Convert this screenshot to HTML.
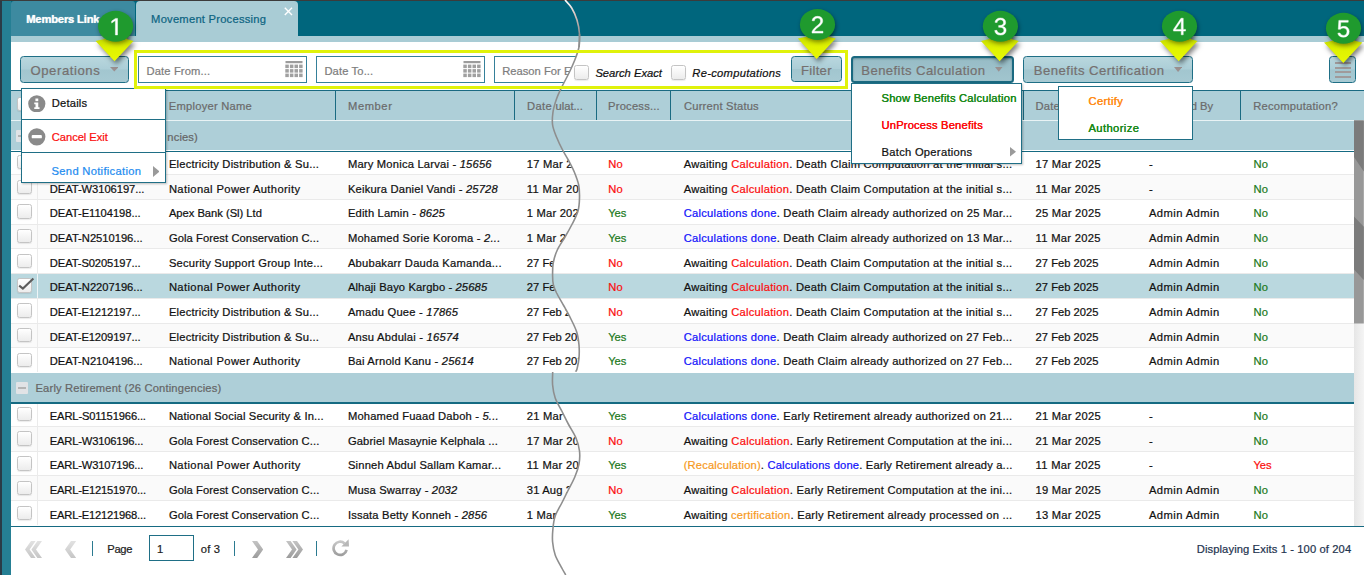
<!DOCTYPE html>
<html><head><meta charset="utf-8"><title>Movement Processing</title>
<style>
html,body{margin:0;padding:0;background:#fff;}
body{width:1365px;height:575px;overflow:hidden;position:relative;font-family:"Liberation Sans",sans-serif;}
.t{position:absolute;white-space:nowrap;font-family:"Liberation Sans",sans-serif;-webkit-text-stroke-width:0.22px;}
</style></head><body>
<div style="position:absolute;left:0.00px;top:0.00px;width:1365.00px;height:575.00px;background:#fff"></div>
<div style="position:absolute;left:0.00px;top:0.00px;width:1365.00px;height:1.00px;background:#3b3b3b"></div>
<div style="position:absolute;left:0.00px;top:1.00px;width:1365.00px;height:35.00px;background:#00667d"></div>
<div style="position:absolute;left:0.00px;top:1.00px;width:2.20px;height:574.00px;background:#2a3b47"></div>
<div style="position:absolute;left:2.00px;top:1.00px;width:9.00px;height:574.00px;background:#257f94"></div>
<div style="position:absolute;left:11.00px;top:1.00px;width:124.00px;height:35.00px;background:#3d8aa0;border-radius:3px 3px 0 0"></div>
<div style="position:absolute;left:136.00px;top:1.00px;width:162.30px;height:35.50px;background:#a9ccd5;border-radius:4px 4px 0 0"></div>
<div style="position:absolute;left:11.00px;top:36.00px;width:1353.00px;height:6.00px;background:#a9ccd5"></div>
<div class="t" style="left:26.20px;top:12.00px;font-size:11.20px;line-height:15px;letter-spacing:-0.168px;text-shadow:0 0 1px rgba(255,255,255,.6);"><span style="color:#fff;font-weight:bold;">Members Link</span></div>
<div class="t" style="left:151.10px;top:12.00px;font-size:11.20px;line-height:15px;letter-spacing:0.231px;"><span style="color:#0d6482;">Movement Processing</span></div>
<svg style="position:absolute;left:284px;top:7.3px" width="9" height="9" viewBox="0 0 9 9"><path d="M0.8 0.8 L8 8 M8 0.8 L0.8 8" stroke="#fff" stroke-width="1.4" fill="none"/></svg>
<div style="position:absolute;left:20.00px;top:56.30px;width:109.00px;height:26.40px;background:linear-gradient(#b9d7de 0%,#acced7 48%,#a2c6cf 52%,#a7cad3 100%);border:1px solid #1f6f86;border-radius:3.5px;box-sizing:border-box;"></div>
<div class="t" style="left:30.50px;top:62.00px;font-size:13.10px;line-height:17px;letter-spacing:0.572px;"><span style="color:#75706f;">Operations</span></div>
<svg style="position:absolute;left:109.80px;top:67.00px" width="8.60" height="4.60" viewBox="0 0 10 6" preserveAspectRatio="none"><path d="M0 0 L10 0 L5 6 Z" fill="#9a9090"/></svg>
<div style="position:absolute;left:138.00px;top:56.00px;width:168.80px;height:26.70px;background:#fff;border:1px solid #35809a;box-sizing:border-box;"></div>
<div class="t" style="left:146.60px;top:64.00px;font-size:11.20px;line-height:15px;letter-spacing:0.114px;"><span style="color:#7d7d7d;">Date From...</span></div>
<svg style="position:absolute;left:285.00px;top:61.00px" width="18" height="17" viewBox="0 0 18 17"><rect x="0.5" y="0" width="17" height="2.2" fill="#9c9c9c"/><rect x="0.30" y="3.60" width="3.5" height="3.5" fill="#a0a0a0"/><rect x="4.90" y="3.60" width="3.5" height="3.5" fill="#a0a0a0"/><rect x="9.50" y="3.60" width="3.5" height="3.5" fill="#a0a0a0"/><rect x="14.10" y="3.60" width="3.5" height="3.5" fill="#a0a0a0"/><rect x="0.30" y="8.10" width="3.5" height="3.5" fill="#a0a0a0"/><rect x="4.90" y="8.10" width="3.5" height="3.5" fill="#a0a0a0"/><rect x="9.50" y="8.10" width="3.5" height="3.5" fill="#a0a0a0"/><rect x="14.10" y="8.10" width="3.5" height="3.5" fill="#a0a0a0"/><rect x="0.30" y="12.60" width="3.5" height="3.5" fill="#a0a0a0"/><rect x="4.90" y="12.60" width="3.5" height="3.5" fill="#a0a0a0"/><rect x="9.50" y="12.60" width="3.5" height="3.5" fill="#a0a0a0"/><rect x="14.10" y="12.60" width="3.5" height="3.5" fill="#a0a0a0"/></svg>
<div style="position:absolute;left:316.00px;top:56.00px;width:169.20px;height:26.70px;background:#fff;border:1px solid #35809a;box-sizing:border-box;"></div>
<div class="t" style="left:324.40px;top:64.00px;font-size:11.20px;line-height:15px;letter-spacing:0.127px;"><span style="color:#7d7d7d;">Date To...</span></div>
<svg style="position:absolute;left:463.30px;top:61.00px" width="18" height="17" viewBox="0 0 18 17"><rect x="0.5" y="0" width="17" height="2.2" fill="#9c9c9c"/><rect x="0.30" y="3.60" width="3.5" height="3.5" fill="#a0a0a0"/><rect x="4.90" y="3.60" width="3.5" height="3.5" fill="#a0a0a0"/><rect x="9.50" y="3.60" width="3.5" height="3.5" fill="#a0a0a0"/><rect x="14.10" y="3.60" width="3.5" height="3.5" fill="#a0a0a0"/><rect x="0.30" y="8.10" width="3.5" height="3.5" fill="#a0a0a0"/><rect x="4.90" y="8.10" width="3.5" height="3.5" fill="#a0a0a0"/><rect x="9.50" y="8.10" width="3.5" height="3.5" fill="#a0a0a0"/><rect x="14.10" y="8.10" width="3.5" height="3.5" fill="#a0a0a0"/><rect x="0.30" y="12.60" width="3.5" height="3.5" fill="#a0a0a0"/><rect x="4.90" y="12.60" width="3.5" height="3.5" fill="#a0a0a0"/><rect x="9.50" y="12.60" width="3.5" height="3.5" fill="#a0a0a0"/><rect x="14.10" y="12.60" width="3.5" height="3.5" fill="#a0a0a0"/></svg>
<div style="position:absolute;left:11.00px;top:90.00px;width:1354.00px;height:30.50px;background:#aecfd8"></div>
<div style="position:absolute;left:11.00px;top:90.00px;width:1354.00px;height:1.20px;background:#1a6a82"></div>
<div style="position:absolute;left:11.00px;top:119.80px;width:1354.00px;height:1.20px;background:#e9f3f5"></div>
<div style="position:absolute;left:156.70px;top:91.00px;width:1.30px;height:28.80px;background:#1b6b82"></div>
<div style="position:absolute;left:335.00px;top:91.00px;width:1.30px;height:28.80px;background:#1b6b82"></div>
<div style="position:absolute;left:514.10px;top:91.00px;width:1.30px;height:28.80px;background:#1b6b82"></div>
<div style="position:absolute;left:595.70px;top:91.00px;width:1.30px;height:28.80px;background:#1b6b82"></div>
<div style="position:absolute;left:669.80px;top:91.00px;width:1.30px;height:28.80px;background:#1b6b82"></div>
<div style="position:absolute;left:1022.60px;top:91.00px;width:1.30px;height:28.80px;background:#1b6b82"></div>
<div style="position:absolute;left:1239.80px;top:91.00px;width:1.30px;height:28.80px;background:#1b6b82"></div>
<div class="t" style="left:168.80px;top:99.00px;font-size:11.20px;line-height:15px;letter-spacing:0.224px;"><span style="color:#6b6b6b;">Employer Name</span></div>
<div class="t" style="left:348.00px;top:99.00px;font-size:11.20px;line-height:15px;letter-spacing:0.571px;"><span style="color:#6b6b6b;">Member</span></div>
<div class="t" style="left:555.60px;top:99.00px;font-size:11.20px;line-height:15px;letter-spacing:-0.028px;"><span style="color:#6b6b6b;">ulat...</span></div>
<div class="t" style="left:608.00px;top:99.00px;font-size:11.20px;line-height:15px;letter-spacing:0.221px;"><span style="color:#6b6b6b;">Process...</span></div>
<div class="t" style="left:684.00px;top:99.00px;font-size:11.20px;line-height:15px;letter-spacing:0.199px;"><span style="color:#6b6b6b;">Current Status</span></div>
<div class="t" style="left:1035.50px;top:99.00px;font-size:11.20px;line-height:15px;letter-spacing:0.211px;"><span style="color:#6b6b6b;">Date</span></div>
<div class="t" style="left:1190.80px;top:99.00px;font-size:11.20px;line-height:15px;letter-spacing:-0.053px;"><span style="color:#6b6b6b;">d By</span></div>
<div class="t" style="left:1253.30px;top:99.00px;font-size:11.20px;line-height:15px;letter-spacing:0.224px;"><span style="color:#6b6b6b;">Recomputation?</span></div>
<div style="position:absolute;left:17.30px;top:97.00px;width:14.40px;height:14.40px;box-sizing:border-box;border:1px solid #c4c4c4;border-radius:2.5px;background:linear-gradient(#ffffff,#ececec);box-shadow:0 1px 1px rgba(0,0,0,.08)"></div>
<div style="position:absolute;left:11.00px;top:121.00px;width:1343.00px;height:31.20px;background:#aecfd8"></div>
<div style="position:absolute;left:11.00px;top:151.00px;width:1343.00px;height:1.40px;background:#156a82"></div>
<div style="position:absolute;left:16.00px;top:130.10px;width:12.00px;height:12.00px;background:#e1e3e6;border-radius:1px"></div>
<div style="position:absolute;left:18.00px;top:135.30px;width:8.00px;height:1.70px;background:#b4b4b4"></div>
<div class="t" style="left:167.30px;top:130.00px;font-size:11.20px;line-height:15px;letter-spacing:0.137px;"><span style="color:#666;">ncies)</span></div>
<div style="position:absolute;left:11.00px;top:150.40px;width:1343.00px;height:24.73px;background:#fff"></div>
<div style="position:absolute;left:11.00px;top:174.00px;width:1343.00px;height:1.00px;background:#eaeaea"></div>
<div style="position:absolute;left:37.00px;top:150.40px;width:1.00px;height:24.23px;background:#ebebeb"></div>
<div style="position:absolute;left:17.30px;top:154.80px;width:14.40px;height:14.40px;box-sizing:border-box;border:1px solid #c4c4c4;border-radius:2.5px;background:linear-gradient(#ffffff,#ececec);box-shadow:0 1px 1px rgba(0,0,0,.08)"></div>
<div class="t" style="left:168.90px;top:157.00px;font-size:11.20px;line-height:15px;letter-spacing:0.207px;"><span style="color:#111;">Electricity Distribution &amp; Su...</span></div>
<div class="t" style="left:347.90px;top:157.00px;font-size:11.20px;line-height:15px;letter-spacing:0.199px;"><span style="color:#111;">Mary Monica Larvai - </span><span style="color:#111;font-style:italic;">15656</span></div>
<div class="t" style="left:608.20px;top:157.00px;font-size:11.20px;line-height:15px;letter-spacing:0.341px;"><span style="color:#fb0d0d;">No</span></div>
<div class="t" style="left:683.70px;top:157.00px;font-size:11.20px;line-height:15px;letter-spacing:0.249px;"><span style="color:#111;">Awaiting </span><span style="color:#fb0d0d;">Calculation</span><span style="color:#111;">. Death Claim Computation at the initial s...</span></div>
<div class="t" style="left:1035.60px;top:157.00px;font-size:11.20px;line-height:15px;letter-spacing:0.219px;"><span style="color:#111;">17 Mar 2025</span></div>
<div class="t" style="left:1148.90px;top:157.00px;font-size:11.20px;line-height:15px;letter-spacing:0.000px;"><span style="color:#111;">-</span></div>
<div class="t" style="left:1253.50px;top:157.00px;font-size:11.20px;line-height:15px;letter-spacing:0.191px;"><span style="color:#1c7a1c;">No</span></div>
<div style="position:absolute;left:11.00px;top:175.13px;width:1343.00px;height:24.73px;background:#fafafa"></div>
<div style="position:absolute;left:11.00px;top:199.00px;width:1343.00px;height:1.00px;background:#eaeaea"></div>
<div style="position:absolute;left:37.00px;top:175.13px;width:1.00px;height:24.23px;background:#ebebeb"></div>
<div style="position:absolute;left:17.30px;top:179.53px;width:14.40px;height:14.40px;box-sizing:border-box;border:1px solid #c4c4c4;border-radius:2.5px;background:linear-gradient(#ffffff,#ececec);box-shadow:0 1px 1px rgba(0,0,0,.08)"></div>
<div class="t" style="left:49.80px;top:182.00px;font-size:11.20px;line-height:15px;letter-spacing:-0.060px;"><span style="color:#111;">DEAT-W3106197...</span></div>
<div class="t" style="left:168.90px;top:182.00px;font-size:11.20px;line-height:15px;letter-spacing:0.377px;"><span style="color:#111;">National Power Authority</span></div>
<div class="t" style="left:347.90px;top:182.00px;font-size:11.20px;line-height:15px;letter-spacing:0.191px;"><span style="color:#111;">Keikura Daniel Vandi - </span><span style="color:#111;font-style:italic;">25728</span></div>
<div class="t" style="left:608.20px;top:182.00px;font-size:11.20px;line-height:15px;letter-spacing:0.341px;"><span style="color:#fb0d0d;">No</span></div>
<div class="t" style="left:683.70px;top:182.00px;font-size:11.20px;line-height:15px;letter-spacing:0.249px;"><span style="color:#111;">Awaiting </span><span style="color:#fb0d0d;">Calculation</span><span style="color:#111;">. Death Claim Computation at the initial s...</span></div>
<div class="t" style="left:1035.60px;top:182.00px;font-size:11.20px;line-height:15px;letter-spacing:0.295px;"><span style="color:#111;">11 Mar 2025</span></div>
<div class="t" style="left:1148.90px;top:182.00px;font-size:11.20px;line-height:15px;letter-spacing:0.000px;"><span style="color:#111;">-</span></div>
<div class="t" style="left:1253.50px;top:182.00px;font-size:11.20px;line-height:15px;letter-spacing:0.191px;"><span style="color:#1c7a1c;">No</span></div>
<div style="position:absolute;left:11.00px;top:199.86px;width:1343.00px;height:24.73px;background:#fff"></div>
<div style="position:absolute;left:11.00px;top:224.00px;width:1343.00px;height:1.00px;background:#eaeaea"></div>
<div style="position:absolute;left:37.00px;top:199.86px;width:1.00px;height:24.23px;background:#ebebeb"></div>
<div style="position:absolute;left:17.30px;top:204.26px;width:14.40px;height:14.40px;box-sizing:border-box;border:1px solid #c4c4c4;border-radius:2.5px;background:linear-gradient(#ffffff,#ececec);box-shadow:0 1px 1px rgba(0,0,0,.08)"></div>
<div class="t" style="left:49.80px;top:206.00px;font-size:11.20px;line-height:15px;letter-spacing:-0.052px;"><span style="color:#111;">DEAT-E1104198...</span></div>
<div class="t" style="left:168.90px;top:206.00px;font-size:11.20px;line-height:15px;letter-spacing:-0.016px;"><span style="color:#111;">Apex Bank (Sl) Ltd</span></div>
<div class="t" style="left:347.90px;top:206.00px;font-size:11.20px;line-height:15px;letter-spacing:0.177px;"><span style="color:#111;">Edith Lamin - </span><span style="color:#111;font-style:italic;">8625</span></div>
<div class="t" style="left:608.20px;top:206.00px;font-size:11.20px;line-height:15px;letter-spacing:-0.024px;"><span style="color:#1c7a1c;">Yes</span></div>
<div class="t" style="left:683.70px;top:206.00px;font-size:11.20px;line-height:15px;letter-spacing:0.237px;"><span style="color:#1212fa;">Calculations done</span><span style="color:#111;">. Death Claim already authorized on 25 Mar...</span></div>
<div class="t" style="left:1035.60px;top:206.00px;font-size:11.20px;line-height:15px;letter-spacing:0.219px;"><span style="color:#111;">25 Mar 2025</span></div>
<div class="t" style="left:1148.90px;top:206.00px;font-size:11.20px;line-height:15px;letter-spacing:0.438px;"><span style="color:#111;">Admin Admin</span></div>
<div class="t" style="left:1253.50px;top:206.00px;font-size:11.20px;line-height:15px;letter-spacing:0.191px;"><span style="color:#1c7a1c;">No</span></div>
<div style="position:absolute;left:11.00px;top:224.59px;width:1343.00px;height:24.73px;background:#fafafa"></div>
<div style="position:absolute;left:11.00px;top:248.00px;width:1343.00px;height:1.00px;background:#eaeaea"></div>
<div style="position:absolute;left:37.00px;top:224.59px;width:1.00px;height:24.23px;background:#ebebeb"></div>
<div style="position:absolute;left:17.30px;top:228.99px;width:14.40px;height:14.40px;box-sizing:border-box;border:1px solid #c4c4c4;border-radius:2.5px;background:linear-gradient(#ffffff,#ececec);box-shadow:0 1px 1px rgba(0,0,0,.08)"></div>
<div class="t" style="left:49.80px;top:231.00px;font-size:11.20px;line-height:15px;letter-spacing:-0.017px;"><span style="color:#111;">DEAT-N2510196...</span></div>
<div class="t" style="left:168.90px;top:231.00px;font-size:11.20px;line-height:15px;letter-spacing:0.078px;"><span style="color:#111;">Gola Forest Conservation C...</span></div>
<div class="t" style="left:347.90px;top:231.00px;font-size:11.20px;line-height:15px;letter-spacing:0.215px;"><span style="color:#111;">Mohamed Sorie Koroma - </span><span style="color:#111;font-style:italic;">2...</span></div>
<div class="t" style="left:608.20px;top:231.00px;font-size:11.20px;line-height:15px;letter-spacing:-0.024px;"><span style="color:#1c7a1c;">Yes</span></div>
<div class="t" style="left:683.70px;top:231.00px;font-size:11.20px;line-height:15px;letter-spacing:0.237px;"><span style="color:#1212fa;">Calculations done</span><span style="color:#111;">. Death Claim already authorized on 13 Mar...</span></div>
<div class="t" style="left:1035.60px;top:231.00px;font-size:11.20px;line-height:15px;letter-spacing:0.295px;"><span style="color:#111;">11 Mar 2025</span></div>
<div class="t" style="left:1148.90px;top:231.00px;font-size:11.20px;line-height:15px;letter-spacing:0.438px;"><span style="color:#111;">Admin Admin</span></div>
<div class="t" style="left:1253.50px;top:231.00px;font-size:11.20px;line-height:15px;letter-spacing:0.191px;"><span style="color:#1c7a1c;">No</span></div>
<div style="position:absolute;left:11.00px;top:249.32px;width:1343.00px;height:24.73px;background:#fff"></div>
<div style="position:absolute;left:11.00px;top:273.00px;width:1343.00px;height:1.00px;background:#eaeaea"></div>
<div style="position:absolute;left:37.00px;top:249.32px;width:1.00px;height:24.23px;background:#ebebeb"></div>
<div style="position:absolute;left:17.30px;top:253.72px;width:14.40px;height:14.40px;box-sizing:border-box;border:1px solid #c4c4c4;border-radius:2.5px;background:linear-gradient(#ffffff,#ececec);box-shadow:0 1px 1px rgba(0,0,0,.08)"></div>
<div class="t" style="left:49.80px;top:256.00px;font-size:11.20px;line-height:15px;letter-spacing:-0.104px;"><span style="color:#111;">DEAT-S0205197...</span></div>
<div class="t" style="left:168.90px;top:256.00px;font-size:11.20px;line-height:15px;letter-spacing:0.208px;"><span style="color:#111;">Security Support Group Inte...</span></div>
<div class="t" style="left:347.90px;top:256.00px;font-size:11.20px;line-height:15px;letter-spacing:0.224px;"><span style="color:#111;">Abubakarr Dauda Kamanda...</span></div>
<div class="t" style="left:608.20px;top:256.00px;font-size:11.20px;line-height:15px;letter-spacing:0.341px;"><span style="color:#fb0d0d;">No</span></div>
<div class="t" style="left:683.70px;top:256.00px;font-size:11.20px;line-height:15px;letter-spacing:0.249px;"><span style="color:#111;">Awaiting </span><span style="color:#fb0d0d;">Calculation</span><span style="color:#111;">. Death Claim Computation at the initial s...</span></div>
<div class="t" style="left:1035.60px;top:256.00px;font-size:11.20px;line-height:15px;letter-spacing:0.009px;"><span style="color:#111;">27 Feb 2025</span></div>
<div class="t" style="left:1148.90px;top:256.00px;font-size:11.20px;line-height:15px;letter-spacing:0.438px;"><span style="color:#111;">Admin Admin</span></div>
<div class="t" style="left:1253.50px;top:256.00px;font-size:11.20px;line-height:15px;letter-spacing:0.191px;"><span style="color:#1c7a1c;">No</span></div>
<div style="position:absolute;left:11.00px;top:274.05px;width:1343.00px;height:24.73px;background:#bad8df"></div>
<div style="position:absolute;left:11.00px;top:298.00px;width:1343.00px;height:1.00px;background:#eaeaea"></div>
<div style="position:absolute;left:37.00px;top:274.05px;width:1.00px;height:24.23px;background:#eef5f7"></div>
<div style="position:absolute;left:17.30px;top:278.45px;width:14.40px;height:14.40px;box-sizing:border-box;border:1px solid #c4c4c4;border-radius:2.5px;background:linear-gradient(#ffffff,#ececec);box-shadow:0 1px 1px rgba(0,0,0,.08)"></div>
<svg style="position:absolute;left:17.50px;top:277.85px;overflow:visible" width="16" height="14" viewBox="0 0 16 14"><path d="M1.2 7.6 L4.9 10.6 L15.4 0.6" stroke="#5c5c5c" stroke-width="2.1" fill="none"/></svg>
<div class="t" style="left:49.80px;top:280.00px;font-size:11.20px;line-height:15px;letter-spacing:-0.017px;"><span style="color:#111;">DEAT-N2207196...</span></div>
<div class="t" style="left:168.90px;top:280.00px;font-size:11.20px;line-height:15px;letter-spacing:0.377px;"><span style="color:#111;">National Power Authority</span></div>
<div class="t" style="left:347.90px;top:280.00px;font-size:11.20px;line-height:15px;letter-spacing:0.121px;"><span style="color:#111;">Alhaji Bayo Kargbo - </span><span style="color:#111;font-style:italic;">25685</span></div>
<div class="t" style="left:608.20px;top:280.00px;font-size:11.20px;line-height:15px;letter-spacing:0.341px;"><span style="color:#fb0d0d;">No</span></div>
<div class="t" style="left:683.70px;top:280.00px;font-size:11.20px;line-height:15px;letter-spacing:0.249px;"><span style="color:#111;">Awaiting </span><span style="color:#fb0d0d;">Calculation</span><span style="color:#111;">. Death Claim Computation at the initial s...</span></div>
<div class="t" style="left:1035.60px;top:280.00px;font-size:11.20px;line-height:15px;letter-spacing:0.009px;"><span style="color:#111;">27 Feb 2025</span></div>
<div class="t" style="left:1148.90px;top:280.00px;font-size:11.20px;line-height:15px;letter-spacing:0.438px;"><span style="color:#111;">Admin Admin</span></div>
<div class="t" style="left:1253.50px;top:280.00px;font-size:11.20px;line-height:15px;letter-spacing:0.191px;"><span style="color:#1c7a1c;">No</span></div>
<div style="position:absolute;left:11.00px;top:298.78px;width:1343.00px;height:24.73px;background:#fff"></div>
<div style="position:absolute;left:11.00px;top:323.00px;width:1343.00px;height:1.00px;background:#eaeaea"></div>
<div style="position:absolute;left:37.00px;top:298.78px;width:1.00px;height:24.23px;background:#ebebeb"></div>
<div style="position:absolute;left:17.30px;top:303.18px;width:14.40px;height:14.40px;box-sizing:border-box;border:1px solid #c4c4c4;border-radius:2.5px;background:linear-gradient(#ffffff,#ececec);box-shadow:0 1px 1px rgba(0,0,0,.08)"></div>
<div class="t" style="left:49.80px;top:305.00px;font-size:11.20px;line-height:15px;letter-spacing:-0.104px;"><span style="color:#111;">DEAT-E1212197...</span></div>
<div class="t" style="left:168.90px;top:305.00px;font-size:11.20px;line-height:15px;letter-spacing:0.207px;"><span style="color:#111;">Electricity Distribution &amp; Su...</span></div>
<div class="t" style="left:347.90px;top:305.00px;font-size:11.20px;line-height:15px;letter-spacing:0.184px;"><span style="color:#111;">Amadu Quee - </span><span style="color:#111;font-style:italic;">17865</span></div>
<div class="t" style="left:608.20px;top:305.00px;font-size:11.20px;line-height:15px;letter-spacing:0.341px;"><span style="color:#fb0d0d;">No</span></div>
<div class="t" style="left:683.70px;top:305.00px;font-size:11.20px;line-height:15px;letter-spacing:0.249px;"><span style="color:#111;">Awaiting </span><span style="color:#fb0d0d;">Calculation</span><span style="color:#111;">. Death Claim Computation at the initial s...</span></div>
<div class="t" style="left:1035.60px;top:305.00px;font-size:11.20px;line-height:15px;letter-spacing:0.009px;"><span style="color:#111;">27 Feb 2025</span></div>
<div class="t" style="left:1148.90px;top:305.00px;font-size:11.20px;line-height:15px;letter-spacing:0.438px;"><span style="color:#111;">Admin Admin</span></div>
<div class="t" style="left:1253.50px;top:305.00px;font-size:11.20px;line-height:15px;letter-spacing:0.191px;"><span style="color:#1c7a1c;">No</span></div>
<div style="position:absolute;left:11.00px;top:323.51px;width:1343.00px;height:24.73px;background:#fafafa"></div>
<div style="position:absolute;left:11.00px;top:347.00px;width:1343.00px;height:1.00px;background:#eaeaea"></div>
<div style="position:absolute;left:37.00px;top:323.51px;width:1.00px;height:24.23px;background:#ebebeb"></div>
<div style="position:absolute;left:17.30px;top:327.91px;width:14.40px;height:14.40px;box-sizing:border-box;border:1px solid #c4c4c4;border-radius:2.5px;background:linear-gradient(#ffffff,#ececec);box-shadow:0 1px 1px rgba(0,0,0,.08)"></div>
<div class="t" style="left:49.80px;top:330.00px;font-size:11.20px;line-height:15px;letter-spacing:-0.104px;"><span style="color:#111;">DEAT-E1209197...</span></div>
<div class="t" style="left:168.90px;top:330.00px;font-size:11.20px;line-height:15px;letter-spacing:0.207px;"><span style="color:#111;">Electricity Distribution &amp; Su...</span></div>
<div class="t" style="left:347.90px;top:330.00px;font-size:11.20px;line-height:15px;letter-spacing:0.231px;"><span style="color:#111;">Ansu Abdulai - </span><span style="color:#111;font-style:italic;">16574</span></div>
<div class="t" style="left:608.20px;top:330.00px;font-size:11.20px;line-height:15px;letter-spacing:-0.024px;"><span style="color:#1c7a1c;">Yes</span></div>
<div class="t" style="left:683.70px;top:330.00px;font-size:11.20px;line-height:15px;letter-spacing:0.227px;"><span style="color:#1212fa;">Calculations done</span><span style="color:#111;">. Death Claim already authorized on 27 Feb...</span></div>
<div class="t" style="left:1035.60px;top:330.00px;font-size:11.20px;line-height:15px;letter-spacing:0.009px;"><span style="color:#111;">27 Feb 2025</span></div>
<div class="t" style="left:1148.90px;top:330.00px;font-size:11.20px;line-height:15px;letter-spacing:0.438px;"><span style="color:#111;">Admin Admin</span></div>
<div class="t" style="left:1253.50px;top:330.00px;font-size:11.20px;line-height:15px;letter-spacing:0.191px;"><span style="color:#1c7a1c;">No</span></div>
<div style="position:absolute;left:11.00px;top:348.24px;width:1343.00px;height:24.73px;background:#fff"></div>
<div style="position:absolute;left:37.00px;top:348.24px;width:1.00px;height:24.23px;background:#ebebeb"></div>
<div style="position:absolute;left:17.30px;top:352.64px;width:14.40px;height:14.40px;box-sizing:border-box;border:1px solid #c4c4c4;border-radius:2.5px;background:linear-gradient(#ffffff,#ececec);box-shadow:0 1px 1px rgba(0,0,0,.08)"></div>
<div class="t" style="left:49.80px;top:354.00px;font-size:11.20px;line-height:15px;letter-spacing:-0.017px;"><span style="color:#111;">DEAT-N2104196...</span></div>
<div class="t" style="left:168.90px;top:354.00px;font-size:11.20px;line-height:15px;letter-spacing:0.377px;"><span style="color:#111;">National Power Authority</span></div>
<div class="t" style="left:347.90px;top:354.00px;font-size:11.20px;line-height:15px;letter-spacing:0.203px;"><span style="color:#111;">Bai Arnold Kanu - </span><span style="color:#111;font-style:italic;">25614</span></div>
<div class="t" style="left:608.20px;top:354.00px;font-size:11.20px;line-height:15px;letter-spacing:-0.024px;"><span style="color:#1c7a1c;">Yes</span></div>
<div class="t" style="left:683.70px;top:354.00px;font-size:11.20px;line-height:15px;letter-spacing:0.227px;"><span style="color:#1212fa;">Calculations done</span><span style="color:#111;">. Death Claim already authorized on 27 Feb...</span></div>
<div class="t" style="left:1035.60px;top:354.00px;font-size:11.20px;line-height:15px;letter-spacing:0.009px;"><span style="color:#111;">27 Feb 2025</span></div>
<div class="t" style="left:1148.90px;top:354.00px;font-size:11.20px;line-height:15px;letter-spacing:0.438px;"><span style="color:#111;">Admin Admin</span></div>
<div class="t" style="left:1253.50px;top:354.00px;font-size:11.20px;line-height:15px;letter-spacing:0.191px;"><span style="color:#1c7a1c;">No</span></div>
<div style="position:absolute;left:11.00px;top:150.90px;width:1343.00px;height:1.30px;background:#156a82"></div>
<div style="position:absolute;left:11.00px;top:372.90px;width:1343.00px;height:30.60px;background:#aecfd8"></div>
<div style="position:absolute;left:11.00px;top:402.30px;width:1343.00px;height:1.40px;background:#156a82"></div>
<div style="position:absolute;left:16.00px;top:381.70px;width:12.00px;height:12.00px;background:#e1e3e6;border-radius:1px"></div>
<div style="position:absolute;left:18.00px;top:386.90px;width:8.00px;height:1.70px;background:#b4b4b4"></div>
<div class="t" style="left:35.50px;top:381.00px;font-size:11.20px;line-height:15px;letter-spacing:0.156px;"><span style="color:#666;">Early Retirement (26 Contingencies)</span></div>
<div style="position:absolute;left:11.00px;top:402.30px;width:1343.00px;height:24.73px;background:#fff"></div>
<div style="position:absolute;left:11.00px;top:426.00px;width:1343.00px;height:1.00px;background:#eaeaea"></div>
<div style="position:absolute;left:37.00px;top:402.30px;width:1.00px;height:24.23px;background:#ebebeb"></div>
<div style="position:absolute;left:17.30px;top:406.70px;width:14.40px;height:14.40px;box-sizing:border-box;border:1px solid #c4c4c4;border-radius:2.5px;background:linear-gradient(#ffffff,#ececec);box-shadow:0 1px 1px rgba(0,0,0,.08)"></div>
<div class="t" style="left:49.80px;top:409.00px;font-size:11.20px;line-height:15px;letter-spacing:-0.158px;"><span style="color:#111;">EARL-S01151966...</span></div>
<div class="t" style="left:168.90px;top:409.00px;font-size:11.20px;line-height:15px;letter-spacing:0.136px;"><span style="color:#111;">National Social Security &amp; In...</span></div>
<div class="t" style="left:347.90px;top:409.00px;font-size:11.20px;line-height:15px;letter-spacing:0.181px;"><span style="color:#111;">Mohamed Fuaad Daboh - </span><span style="color:#111;font-style:italic;">5...</span></div>
<div class="t" style="left:608.20px;top:409.00px;font-size:11.20px;line-height:15px;letter-spacing:-0.024px;"><span style="color:#1c7a1c;">Yes</span></div>
<div class="t" style="left:683.70px;top:409.00px;font-size:11.20px;line-height:15px;letter-spacing:0.233px;"><span style="color:#1212fa;">Calculations done</span><span style="color:#111;">. Early Retirement already authorized on 21...</span></div>
<div class="t" style="left:1035.60px;top:409.00px;font-size:11.20px;line-height:15px;letter-spacing:0.219px;"><span style="color:#111;">21 Mar 2025</span></div>
<div class="t" style="left:1148.90px;top:409.00px;font-size:11.20px;line-height:15px;letter-spacing:0.000px;"><span style="color:#111;">-</span></div>
<div class="t" style="left:1253.50px;top:409.00px;font-size:11.20px;line-height:15px;letter-spacing:0.191px;"><span style="color:#1c7a1c;">No</span></div>
<div style="position:absolute;left:11.00px;top:427.03px;width:1343.00px;height:24.73px;background:#fafafa"></div>
<div style="position:absolute;left:11.00px;top:451.00px;width:1343.00px;height:1.00px;background:#eaeaea"></div>
<div style="position:absolute;left:37.00px;top:427.03px;width:1.00px;height:24.23px;background:#ebebeb"></div>
<div style="position:absolute;left:17.30px;top:431.43px;width:14.40px;height:14.40px;box-sizing:border-box;border:1px solid #c4c4c4;border-radius:2.5px;background:linear-gradient(#ffffff,#ececec);box-shadow:0 1px 1px rgba(0,0,0,.08)"></div>
<div class="t" style="left:49.80px;top:434.00px;font-size:11.20px;line-height:15px;letter-spacing:-0.194px;"><span style="color:#111;">EARL-W3106196...</span></div>
<div class="t" style="left:168.90px;top:434.00px;font-size:11.20px;line-height:15px;letter-spacing:0.085px;"><span style="color:#111;">Gola Forest Conservation C...</span></div>
<div class="t" style="left:347.90px;top:434.00px;font-size:11.20px;line-height:15px;letter-spacing:0.134px;"><span style="color:#111;">Gabriel Masaynie Kelphala ...</span></div>
<div class="t" style="left:608.20px;top:434.00px;font-size:11.20px;line-height:15px;letter-spacing:0.341px;"><span style="color:#fb0d0d;">No</span></div>
<div class="t" style="left:683.70px;top:434.00px;font-size:11.20px;line-height:15px;letter-spacing:0.272px;"><span style="color:#111;">Awaiting </span><span style="color:#fb0d0d;">Calculation</span><span style="color:#111;">. Early Retirement Computation at the ini...</span></div>
<div class="t" style="left:1035.60px;top:434.00px;font-size:11.20px;line-height:15px;letter-spacing:0.219px;"><span style="color:#111;">21 Mar 2025</span></div>
<div class="t" style="left:1148.90px;top:434.00px;font-size:11.20px;line-height:15px;letter-spacing:0.000px;"><span style="color:#111;">-</span></div>
<div class="t" style="left:1253.50px;top:434.00px;font-size:11.20px;line-height:15px;letter-spacing:0.191px;"><span style="color:#1c7a1c;">No</span></div>
<div style="position:absolute;left:11.00px;top:451.76px;width:1343.00px;height:24.73px;background:#fff"></div>
<div style="position:absolute;left:11.00px;top:475.00px;width:1343.00px;height:1.00px;background:#eaeaea"></div>
<div style="position:absolute;left:37.00px;top:451.76px;width:1.00px;height:24.23px;background:#ebebeb"></div>
<div style="position:absolute;left:17.30px;top:456.16px;width:14.40px;height:14.40px;box-sizing:border-box;border:1px solid #c4c4c4;border-radius:2.5px;background:linear-gradient(#ffffff,#ececec);box-shadow:0 1px 1px rgba(0,0,0,.08)"></div>
<div class="t" style="left:49.80px;top:458.00px;font-size:11.20px;line-height:15px;letter-spacing:-0.194px;"><span style="color:#111;">EARL-W3107196...</span></div>
<div class="t" style="left:168.90px;top:458.00px;font-size:11.20px;line-height:15px;letter-spacing:0.386px;"><span style="color:#111;">National Power Authority</span></div>
<div class="t" style="left:347.90px;top:458.00px;font-size:11.20px;line-height:15px;letter-spacing:0.190px;"><span style="color:#111;">Sinneh Abdul Sallam Kamar...</span></div>
<div class="t" style="left:608.20px;top:458.00px;font-size:11.20px;line-height:15px;letter-spacing:-0.024px;"><span style="color:#1c7a1c;">Yes</span></div>
<div class="t" style="left:683.70px;top:458.00px;font-size:11.20px;line-height:15px;letter-spacing:0.169px;"><span style="color:#f79a1e;">(Recalculation)</span><span style="color:#111;">. </span><span style="color:#1212fa;">Calculations done</span><span style="color:#111;">. Early Retirement already a...</span></div>
<div class="t" style="left:1035.60px;top:458.00px;font-size:11.20px;line-height:15px;letter-spacing:0.295px;"><span style="color:#111;">11 Mar 2025</span></div>
<div class="t" style="left:1148.90px;top:458.00px;font-size:11.20px;line-height:15px;letter-spacing:0.000px;"><span style="color:#111;">-</span></div>
<div class="t" style="left:1253.50px;top:458.00px;font-size:11.20px;line-height:15px;letter-spacing:-0.090px;"><span style="color:#fb0d0d;">Yes</span></div>
<div style="position:absolute;left:11.00px;top:476.49px;width:1343.00px;height:24.73px;background:#fafafa"></div>
<div style="position:absolute;left:11.00px;top:500.00px;width:1343.00px;height:1.00px;background:#eaeaea"></div>
<div style="position:absolute;left:37.00px;top:476.49px;width:1.00px;height:24.23px;background:#ebebeb"></div>
<div style="position:absolute;left:17.30px;top:480.89px;width:14.40px;height:14.40px;box-sizing:border-box;border:1px solid #c4c4c4;border-radius:2.5px;background:linear-gradient(#ffffff,#ececec);box-shadow:0 1px 1px rgba(0,0,0,.08)"></div>
<div class="t" style="left:49.80px;top:483.00px;font-size:11.20px;line-height:15px;letter-spacing:-0.207px;"><span style="color:#111;">EARL-E12151970...</span></div>
<div class="t" style="left:168.90px;top:483.00px;font-size:11.20px;line-height:15px;letter-spacing:0.085px;"><span style="color:#111;">Gola Forest Conservation C...</span></div>
<div class="t" style="left:347.90px;top:483.00px;font-size:11.20px;line-height:15px;letter-spacing:0.166px;"><span style="color:#111;">Musa Swarray - </span><span style="color:#111;font-style:italic;">2032</span></div>
<div class="t" style="left:608.20px;top:483.00px;font-size:11.20px;line-height:15px;letter-spacing:0.341px;"><span style="color:#fb0d0d;">No</span></div>
<div class="t" style="left:683.70px;top:483.00px;font-size:11.20px;line-height:15px;letter-spacing:0.272px;"><span style="color:#111;">Awaiting </span><span style="color:#fb0d0d;">Calculation</span><span style="color:#111;">. Early Retirement Computation at the ini...</span></div>
<div class="t" style="left:1035.60px;top:483.00px;font-size:11.20px;line-height:15px;letter-spacing:0.219px;"><span style="color:#111;">19 Mar 2025</span></div>
<div class="t" style="left:1148.90px;top:483.00px;font-size:11.20px;line-height:15px;letter-spacing:0.438px;"><span style="color:#111;">Admin Admin</span></div>
<div class="t" style="left:1253.50px;top:483.00px;font-size:11.20px;line-height:15px;letter-spacing:0.191px;"><span style="color:#1c7a1c;">No</span></div>
<div style="position:absolute;left:11.00px;top:501.22px;width:1343.00px;height:24.73px;background:#fff"></div>
<div style="position:absolute;left:37.00px;top:501.22px;width:1.00px;height:24.23px;background:#ebebeb"></div>
<div style="position:absolute;left:17.30px;top:505.62px;width:14.40px;height:14.40px;box-sizing:border-box;border:1px solid #c4c4c4;border-radius:2.5px;background:linear-gradient(#ffffff,#ececec);box-shadow:0 1px 1px rgba(0,0,0,.08)"></div>
<div class="t" style="left:49.80px;top:508.00px;font-size:11.20px;line-height:15px;letter-spacing:-0.207px;"><span style="color:#111;">EARL-E12121968...</span></div>
<div class="t" style="left:168.90px;top:508.00px;font-size:11.20px;line-height:15px;letter-spacing:0.085px;"><span style="color:#111;">Gola Forest Conservation C...</span></div>
<div class="t" style="left:347.90px;top:508.00px;font-size:11.20px;line-height:15px;letter-spacing:0.169px;"><span style="color:#111;">Issata Betty Konneh - </span><span style="color:#111;font-style:italic;">2856</span></div>
<div class="t" style="left:608.20px;top:508.00px;font-size:11.20px;line-height:15px;letter-spacing:-0.024px;"><span style="color:#1c7a1c;">Yes</span></div>
<div class="t" style="left:683.70px;top:508.00px;font-size:11.20px;line-height:15px;letter-spacing:0.230px;"><span style="color:#111;">Awaiting </span><span style="color:#f79a1e;">certification</span><span style="color:#111;">. Early Retirement already processed on ...</span></div>
<div class="t" style="left:1035.60px;top:508.00px;font-size:11.20px;line-height:15px;letter-spacing:0.219px;"><span style="color:#111;">13 Mar 2025</span></div>
<div class="t" style="left:1148.90px;top:508.00px;font-size:11.20px;line-height:15px;letter-spacing:0.438px;"><span style="color:#111;">Admin Admin</span></div>
<div class="t" style="left:1253.50px;top:508.00px;font-size:11.20px;line-height:15px;letter-spacing:0.191px;"><span style="color:#1c7a1c;">No</span></div>
<div style="position:absolute;left:11.00px;top:402.40px;width:1343.00px;height:1.30px;background:#156a82"></div>
<div style="position:absolute;left:11.00px;top:525.60px;width:1352.80px;height:1.50px;background:#166a82"></div>
<div style="position:absolute;left:1354.00px;top:121.00px;width:11.00px;height:405.00px;background:linear-gradient(90deg,#e6e6e6,#f6f6f6)"></div>
<svg style="position:absolute;left:0;top:0" width="1365" height="575"><rect x="1354" y="120.4" width="9.8" height="203.1" fill="#989898"/><path d="M1354 120.4 H1363.8 V171.6 L1354 157 Z M1354 216.6 L1363.8 226.8 V279.9 L1354 269.4 Z" fill="#7b7b7b"/></svg>
<svg style="position:absolute;left:25.40px;top:540.50px" width="17" height="17" viewBox="0 0 17 17"><defs><linearGradient id="cg1" x1="0" y1="0" x2="0" y2="1"><stop offset="0" stop-color="#e2e2e2"/><stop offset="1" stop-color="#c6c6c6"/></linearGradient></defs><g fill="url(#cg1)"><path d="M6 0 L10.6 0 L4.6 8.5 L10.6 17 L6 17 L0 8.5 Z"/><path d="M12.4 0 L17 0 L11 8.5 L17 17 L12.4 17 L6.4 8.5 Z"/></g></svg>
<svg style="position:absolute;left:65.00px;top:540.50px" width="11.2" height="17" viewBox="0 0 11.2 17"><defs><linearGradient id="cg2" x1="0" y1="0" x2="0" y2="1"><stop offset="0" stop-color="#e2e2e2"/><stop offset="1" stop-color="#c6c6c6"/></linearGradient></defs><g fill="url(#cg2)"><path d="M6 0 L11.2 0 L5.2 8.5 L11.2 17 L6 17 L0 8.5 Z"/></g></svg>
<div style="position:absolute;left:92.00px;top:541.30px;width:1.30px;height:15.00px;background:#2b7a90"></div>
<div class="t" style="left:107.30px;top:542.00px;font-size:11.20px;line-height:15px;letter-spacing:-0.314px;"><span style="color:#222;">Page</span></div>
<div style="position:absolute;left:148.80px;top:535.00px;width:45.00px;height:26.40px;background:#fff;border:1px solid #1f6f86;box-sizing:border-box"></div>
<div class="t" style="left:157.00px;top:542.00px;font-size:11.20px;line-height:15px;letter-spacing:0.000px;"><span style="color:#222;">1</span></div>
<div class="t" style="left:200.80px;top:542.00px;font-size:11.20px;line-height:15px;letter-spacing:0.130px;"><span style="color:#222;">of 3</span></div>
<div style="position:absolute;left:234.00px;top:541.30px;width:1.30px;height:15.00px;background:#2b7a90"></div>
<svg style="position:absolute;left:251.80px;top:540.50px" width="11.2" height="17" viewBox="0 0 11.2 17"><defs><linearGradient id="cg3" x1="0" y1="0" x2="0" y2="1"><stop offset="0" stop-color="#c4c4c4"/><stop offset="1" stop-color="#9c9c9c"/></linearGradient></defs><g transform="translate(11.2 0) scale(-1 1)" fill="url(#cg3)"><path d="M6 0 L11.2 0 L5.2 8.5 L11.2 17 L6 17 L0 8.5 Z"/></g></svg>
<svg style="position:absolute;left:285.50px;top:540.50px" width="17" height="17" viewBox="0 0 17 17"><defs><linearGradient id="cg4" x1="0" y1="0" x2="0" y2="1"><stop offset="0" stop-color="#c4c4c4"/><stop offset="1" stop-color="#9c9c9c"/></linearGradient></defs><g transform="translate(17 0) scale(-1 1)" fill="url(#cg4)"><path d="M6 0 L10.6 0 L4.6 8.5 L10.6 17 L6 17 L0 8.5 Z"/><path d="M12.4 0 L17 0 L11 8.5 L17 17 L12.4 17 L6.4 8.5 Z"/></g></svg>
<div style="position:absolute;left:316.00px;top:541.30px;width:1.30px;height:15.00px;background:#2b7a90"></div>
<svg style="position:absolute;left:331px;top:539.3px" width="19" height="18" viewBox="0 0 19 18"><defs><linearGradient id="rg" x1="0" y1="0" x2="0" y2="1"><stop offset="0" stop-color="#c6c6c6"/><stop offset="1" stop-color="#9e9e9e"/></linearGradient></defs><path d="M13.6 4.4 A6.6 6.6 0 1 0 15.6 10.9" stroke="url(#rg)" stroke-width="2.7" fill="none"/><path d="M10.4 7.4 L18 7.6 L17.6 0.2 Z" fill="#b8b8b8"/></svg>
<div class="t" style="left:1196.70px;top:542.00px;font-size:11.20px;line-height:15px;letter-spacing:0.110px;"><span style="color:#1f3550;">Displaying Exits 1 - 100 of 204</span></div>
<div style="position:absolute;left:574.40px;top:65.40px;width:14.40px;height:14.40px;box-sizing:border-box;border:1px solid #c4c4c4;border-radius:2.5px;background:linear-gradient(#ffffff,#ececec);box-shadow:0 1px 1px rgba(0,0,0,.08)"></div>
<div class="t" style="left:595.40px;top:66.00px;font-size:11.20px;line-height:15px;letter-spacing:-0.001px;"><span style="color:#111;font-style:italic;">Search Exact</span></div>
<div style="position:absolute;left:671.20px;top:65.40px;width:14.40px;height:14.40px;box-sizing:border-box;border:1px solid #c4c4c4;border-radius:2.5px;background:linear-gradient(#ffffff,#ececec);box-shadow:0 1px 1px rgba(0,0,0,.08)"></div>
<div class="t" style="left:692.30px;top:66.00px;font-size:11.20px;line-height:15px;letter-spacing:0.283px;"><span style="color:#111;font-style:italic;">Re-computations</span></div>
<div style="position:absolute;left:791.20px;top:56.30px;width:50.60px;height:26.20px;background:linear-gradient(#b9d7de 0%,#acced7 48%,#a2c6cf 52%,#a7cad3 100%);border:1px solid #1f6f86;border-radius:3.5px;box-sizing:border-box;"></div>
<div class="t" style="left:801.00px;top:62.00px;font-size:13.10px;line-height:17px;letter-spacing:0.282px;"><span style="color:#75706f;">Filter</span></div>
<div style="position:absolute;left:851.30px;top:56.30px;width:162.40px;height:26.40px;background:linear-gradient(#97bcc6 0%,#a1c5ce 100%);border:2px solid #1a6980;border-radius:3.5px;box-sizing:border-box;box-shadow:inset 0 1px 2px rgba(0,60,80,.35);"></div>
<div class="t" style="left:861.30px;top:62.00px;font-size:13.10px;line-height:17px;letter-spacing:0.421px;"><span style="color:#75706f;">Benefits Calculation</span></div>
<svg style="position:absolute;left:995.30px;top:67.00px" width="7.50" height="4.70" viewBox="0 0 10 6" preserveAspectRatio="none"><path d="M0 0 L10 0 L5 6 Z" fill="#9a9090"/></svg>
<div style="position:absolute;left:1023.40px;top:56.30px;width:169.50px;height:26.40px;background:linear-gradient(#b9d7de 0%,#acced7 48%,#a2c6cf 52%,#a7cad3 100%);border:1px solid #1f6f86;border-radius:3.5px;box-sizing:border-box;"></div>
<div class="t" style="left:1033.80px;top:62.00px;font-size:13.10px;line-height:17px;letter-spacing:0.480px;"><span style="color:#75706f;">Benefits Certification</span></div>
<svg style="position:absolute;left:1174.00px;top:66.80px" width="8.20" height="4.90" viewBox="0 0 10 6" preserveAspectRatio="none"><path d="M0 0 L10 0 L5 6 Z" fill="#9a9090"/></svg>
<div style="position:absolute;left:1329.30px;top:56.00px;width:26.60px;height:26.70px;background:linear-gradient(#b9d7de 0%,#acced7 48%,#a2c6cf 52%,#a7cad3 100%);border:1px solid #1f6f86;border-radius:3.5px;box-sizing:border-box;"></div>
<div style="position:absolute;left:1335.00px;top:61.80px;width:16.00px;height:1.90px;background:#a09a9a"></div>
<div style="position:absolute;left:1335.00px;top:66.80px;width:16.00px;height:1.90px;background:#a09a9a"></div>
<div style="position:absolute;left:1335.00px;top:71.30px;width:16.00px;height:1.90px;background:#a09a9a"></div>
<div style="position:absolute;left:1335.00px;top:75.80px;width:16.00px;height:1.90px;background:#a09a9a"></div>
<div style="position:absolute;left:0;top:0;width:1365px;height:575px;clip-path:polygon(0px 0px,565.0px 0.0px,571.7px 8.0px,577.0px 20.0px,579.5px 34.0px,579.0px 47.0px,574.8px 60.0px,569.0px 73.0px,562.3px 86.0px,556.5px 99.0px,553.0px 112.0px,552.6px 125.0px,556.5px 137.0px,562.6px 150.0px,568.3px 160.0px,574.3px 172.0px,578.7px 185.0px,579.5px 198.0px,578.0px 211.0px,572.2px 224.0px,565.0px 237.0px,557.3px 250.0px,553.2px 263.0px,552.6px 276.0px,553.4px 285.0px,556.6px 293.0px,563.9px 306.0px,570.9px 319.0px,576.7px 332.0px,579.0px 345.0px,579.0px 358.0px,577.0px 369.0px,575.5px 371.7px,552.7px 372.0px,552.6px 385.0px,555.2px 398.0px,561.8px 411.0px,568.3px 424.0px,576.0px 438.0px,579.5px 451.0px,579.0px 464.0px,574.8px 477.0px,568.3px 490.0px,561.8px 503.0px,555.2px 516.0px,552.9px 529.0px,552.6px 542.0px,555.2px 555.0px,561.8px 568.0px,565.7px 575.0px,0px 575px)"><div style="position:absolute;left:494.00px;top:56.00px;width:95.00px;height:26.70px;background:#fff;border:1px solid #35809a;box-sizing:border-box;"></div>
<div class="t" style="left:502.20px;top:64.00px;font-size:11.20px;line-height:15px;letter-spacing:0.017px;"><span style="color:#7d7d7d;">Reason For E</span></div>
<div class="t" style="left:527.00px;top:99.00px;font-size:11.20px;line-height:15px;letter-spacing:0.336px;"><span style="color:#6b6b6b;">Date</span></div>
<div class="t" style="left:526.80px;top:157.00px;font-size:11.20px;line-height:15px;letter-spacing:0.219px;"><span style="color:#111;">17 Mar 2025</span></div>
<div class="t" style="left:526.80px;top:182.00px;font-size:11.20px;line-height:15px;letter-spacing:0.295px;"><span style="color:#111;">11 Mar 2025</span></div>
<div class="t" style="left:526.80px;top:206.00px;font-size:11.20px;line-height:15px;letter-spacing:0.194px;"><span style="color:#111;">1 Mar 2025</span></div>
<div class="t" style="left:526.80px;top:231.00px;font-size:11.20px;line-height:15px;letter-spacing:0.194px;"><span style="color:#111;">1 Mar 2025</span></div>
<div class="t" style="left:526.80px;top:256.00px;font-size:11.20px;line-height:15px;letter-spacing:0.009px;"><span style="color:#111;">27 Feb 2025</span></div>
<div class="t" style="left:526.80px;top:280.00px;font-size:11.20px;line-height:15px;letter-spacing:0.009px;"><span style="color:#111;">27 Feb 2025</span></div>
<div class="t" style="left:526.80px;top:305.00px;font-size:11.20px;line-height:15px;letter-spacing:0.009px;"><span style="color:#111;">27 Feb 2025</span></div>
<div class="t" style="left:526.80px;top:330.00px;font-size:11.20px;line-height:15px;letter-spacing:0.009px;"><span style="color:#111;">27 Feb 2025</span></div>
<div class="t" style="left:526.80px;top:354.00px;font-size:11.20px;line-height:15px;letter-spacing:0.009px;"><span style="color:#111;">27 Feb 2025</span></div>
<div class="t" style="left:526.80px;top:409.00px;font-size:11.20px;line-height:15px;letter-spacing:0.219px;"><span style="color:#111;">21 Mar 2025</span></div>
<div class="t" style="left:526.80px;top:434.00px;font-size:11.20px;line-height:15px;letter-spacing:0.219px;"><span style="color:#111;">17 Mar 2025</span></div>
<div class="t" style="left:526.80px;top:458.00px;font-size:11.20px;line-height:15px;letter-spacing:0.295px;"><span style="color:#111;">11 Mar 2025</span></div>
<div class="t" style="left:526.80px;top:483.00px;font-size:11.20px;line-height:15px;letter-spacing:0.154px;"><span style="color:#111;">31 Aug 2025</span></div>
<div class="t" style="left:526.80px;top:508.00px;font-size:11.20px;line-height:15px;letter-spacing:0.194px;"><span style="color:#111;">1 Mar 2025</span></div></div><svg style="position:absolute;left:0;top:0" width="1365" height="575"><defs><linearGradient id="tg" gradientUnits="userSpaceOnUse" x1="0" y1="0" x2="0" y2="34"><stop offset="0" stop-color="#ffffff"/><stop offset="0.45" stop-color="#d9c4bf"/><stop offset="1" stop-color="#8e8e8e"/></linearGradient></defs><path d="M565.0 0.0 C566.1 1.3 569.7 4.7 571.7 8.0 C573.7 11.3 575.7 15.7 577.0 20.0 C578.3 24.3 579.2 29.5 579.5 34.0 C579.8 38.5 579.1 44.8 579.0 47.0" stroke="url(#tg)" stroke-width="1.6" fill="none"/><path d="M579.5 34.0 C579.4 36.2 579.8 42.7 579.0 47.0 C578.2 51.3 576.5 55.7 574.8 60.0 C573.1 64.3 571.1 68.7 569.0 73.0 C566.9 77.3 564.4 81.7 562.3 86.0 C560.2 90.3 558.0 94.7 556.5 99.0 C555.0 103.3 553.6 107.7 553.0 112.0 C552.4 116.3 552.0 120.8 552.6 125.0 C553.2 129.2 554.8 132.8 556.5 137.0 C558.2 141.2 560.6 146.2 562.6 150.0 C564.6 153.8 566.3 156.3 568.3 160.0 C570.2 163.7 572.6 167.8 574.3 172.0 C576.0 176.2 577.8 180.7 578.7 185.0 C579.6 189.3 579.6 193.7 579.5 198.0 C579.4 202.3 579.2 206.7 578.0 211.0 C576.8 215.3 574.4 219.7 572.2 224.0 C570.0 228.3 567.5 232.7 565.0 237.0 C562.5 241.3 559.3 245.7 557.3 250.0 C555.3 254.3 554.0 258.7 553.2 263.0 C552.4 267.3 552.6 272.3 552.6 276.0 C552.6 279.7 552.7 282.2 553.4 285.0 C554.1 287.8 554.9 289.5 556.6 293.0 C558.4 296.5 561.5 301.7 563.9 306.0 C566.3 310.3 568.8 314.7 570.9 319.0 C573.0 323.3 575.4 327.7 576.7 332.0 C578.1 336.3 578.6 340.7 579.0 345.0 C579.4 349.3 579.3 354.0 579.0 358.0 C578.7 362.0 577.6 366.7 577.0 369.0 C576.4 371.3 575.8 371.2 575.5 371.7" stroke="#8e8e8e" stroke-width="1.6" fill="none"/><path d="M552.7 372.0 C552.7 374.2 552.2 380.7 552.6 385.0 C553.0 389.3 553.7 393.7 555.2 398.0 C556.7 402.3 559.6 406.7 561.8 411.0 C564.0 415.3 565.9 419.5 568.3 424.0 C570.7 428.5 574.1 433.5 576.0 438.0 C577.9 442.5 579.0 446.7 579.5 451.0 C580.0 455.3 579.8 459.7 579.0 464.0 C578.2 468.3 576.6 472.7 574.8 477.0 C573.0 481.3 570.5 485.7 568.3 490.0 C566.1 494.3 564.0 498.7 561.8 503.0 C559.6 507.3 556.7 511.7 555.2 516.0 C553.7 520.3 553.3 524.7 552.9 529.0 C552.5 533.3 552.2 537.7 552.6 542.0 C553.0 546.3 553.7 550.7 555.2 555.0 C556.7 559.3 560.0 564.7 561.8 568.0 C563.5 571.3 565.1 573.8 565.7 575.0" stroke="#8e8e8e" stroke-width="1.6" fill="none"/></svg>
<div style="position:absolute;left:21.20px;top:88.20px;width:144.60px;height:94.60px;background:#fff;border:1px solid #1f6f86;box-sizing:border-box;box-shadow:1px 1px 2px rgba(0,0,0,.25);"></div>
<div style="position:absolute;left:22.00px;top:118.80px;width:143.00px;height:1.20px;background:#1f6f86"></div>
<div style="position:absolute;left:22.00px;top:152.10px;width:143.00px;height:1.20px;background:#1f6f86"></div>
<svg style="position:absolute;left:28.2px;top:94.6px" width="17.6" height="17.6" viewBox="0 0 18 18"><circle cx="9" cy="9" r="8.8" fill="#8a8a8a"/><rect x="7.6" y="3.6" width="2.9" height="2.7" fill="#fff"/><path d="M6.4 7.8 H10.5 V12.6 H11.8 V14.2 H6.4 V12.6 H7.7 V9.4 H6.4 Z" fill="#fff"/></svg>
<div class="t" style="left:51.80px;top:96.00px;font-size:11.20px;line-height:15px;letter-spacing:0.181px;"><span style="color:#111;">Details</span></div>
<svg style="position:absolute;left:28.2px;top:128.3px" width="17.6" height="17.6" viewBox="0 0 18 18"><circle cx="9" cy="9" r="8.8" fill="#8a8a8a"/><rect x="3.8" y="7.2" width="10.4" height="3.4" rx="1" fill="#fff"/></svg>
<div class="t" style="left:51.80px;top:130.00px;font-size:11.20px;line-height:15px;letter-spacing:-0.059px;"><span style="color:#fb0d0d;">Cancel Exit</span></div>
<div class="t" style="left:51.60px;top:164.00px;font-size:11.20px;line-height:15px;letter-spacing:0.296px;"><span style="color:#1e8cf0;">Send Notification</span></div>
<svg style="position:absolute;left:152.80px;top:165.50px" width="6.60" height="11.00" viewBox="0 0 6 10" preserveAspectRatio="none"><path d="M0 0 L6 5 L0 10 Z" fill="#9a9a9a"/></svg>
<div style="position:absolute;left:851.30px;top:83.20px;width:170.80px;height:80.40px;background:#fff;border:1px solid #1f6f86;box-sizing:border-box;box-shadow:1px 1px 2px rgba(0,0,0,.25);"></div>
<div class="t" style="left:881.50px;top:91.00px;font-size:11.20px;line-height:15px;letter-spacing:0.207px;text-shadow:0 0 .3px #1a8a1a;"><span style="color:#1a8a1a;">Show Benefits Calculation</span></div>
<div class="t" style="left:881.50px;top:118.00px;font-size:11.20px;line-height:15px;letter-spacing:0.175px;text-shadow:0 0 .3px #fb0d0d;"><span style="color:#fb0d0d;">UnProcess Benefits</span></div>
<div class="t" style="left:881.50px;top:145.00px;font-size:11.20px;line-height:15px;letter-spacing:0.279px;"><span style="color:#111;">Batch Operations</span></div>
<svg style="position:absolute;left:1010.00px;top:147.30px" width="6.00" height="9.40" viewBox="0 0 6 10" preserveAspectRatio="none"><path d="M0 0 L6 5 L0 10 Z" fill="#9a9a9a"/></svg>
<div style="position:absolute;left:1058.10px;top:86.20px;width:134.90px;height:54.00px;background:#fff;border:1px solid #1f6f86;box-sizing:border-box;"></div>
<div class="t" style="left:1088.50px;top:94.00px;font-size:11.20px;line-height:15px;letter-spacing:0.349px;text-shadow:0 0 .3px #ff8c1a;"><span style="color:#ff8c1a;">Certify</span></div>
<div class="t" style="left:1088.50px;top:121.00px;font-size:11.20px;line-height:15px;letter-spacing:0.398px;text-shadow:0 0 .3px #1a8a1a;"><span style="color:#1a8a1a;">Authorize</span></div>
<div style="position:absolute;left:133.60px;top:50.00px;width:714.00px;height:38.80px;border:3px solid #e0f20a;box-sizing:border-box;"></div>
<svg style="position:absolute;left:0;top:0;overflow:visible" width="1365" height="100"><defs><linearGradient id="ag1" gradientUnits="userSpaceOnUse" x1="0" y1="39.3" x2="0" y2="61.2"><stop offset="0" stop-color="#c9de00"/><stop offset="0.45" stop-color="#e0f300"/><stop offset="1" stop-color="#e8f805"/></linearGradient></defs><path style="filter:drop-shadow(2px 3px 2.5px rgba(0,0,0,.5))" d="M104.6 26.3 L126.6 26.3 L126.6 39.1 L133.5 40.9 L114.5 61.2 L95.6 40.9 L104.6 39.1 Z" fill="url(#ag1)"/><ellipse style="filter:drop-shadow(1px 2.5px 2px rgba(0,0,0,.4))" cx="115.6" cy="26.3" rx="17.6" ry="15.5" fill="#1f9a2e"/></svg>
<svg style="position:absolute;left:0;top:0;overflow:visible" width="1365" height="100"><path transform="translate(109.37 34.90) scale(0.01172 -0.01172)" d="M515 0V1237L197 1010V1180L530 1409H696V0Z" fill="#fff" stroke="#fff" stroke-width="40"/></svg>
<svg style="position:absolute;left:0;top:0;overflow:visible" width="1365" height="100"><defs><linearGradient id="ag2" gradientUnits="userSpaceOnUse" x1="0" y1="36.9" x2="0" y2="59.1"><stop offset="0" stop-color="#c9de00"/><stop offset="0.45" stop-color="#e0f300"/><stop offset="1" stop-color="#e8f805"/></linearGradient></defs><path style="filter:drop-shadow(2px 3px 2.5px rgba(0,0,0,.5))" d="M806.5 24.5 L828.5 24.5 L828.5 36.7 L835.7 38.5 L816.6 59.1 L797.8 38.5 L806.5 36.7 Z" fill="url(#ag2)"/><ellipse style="filter:drop-shadow(1px 2.5px 2px rgba(0,0,0,.4))" cx="817.5" cy="24.5" rx="17.6" ry="15.5" fill="#1f9a2e"/></svg>
<svg style="position:absolute;left:0;top:0;overflow:visible" width="1365" height="100"><path transform="translate(810.83 33.10) scale(0.01172 -0.01172)" d="M103 0V127Q154 244 227.5 333.5Q301 423 382.0 495.5Q463 568 542.5 630.0Q622 692 686.0 754.0Q750 816 789.5 884.0Q829 952 829 1038Q829 1154 761.0 1218.0Q693 1282 572 1282Q457 1282 382.5 1219.5Q308 1157 295 1044L111 1061Q131 1230 254.5 1330.0Q378 1430 572 1430Q785 1430 899.5 1329.5Q1014 1229 1014 1044Q1014 962 976.5 881.0Q939 800 865.0 719.0Q791 638 582 468Q467 374 399.0 298.5Q331 223 301 153H1036V0Z" fill="#fff" stroke="#fff" stroke-width="40"/></svg>
<svg style="position:absolute;left:0;top:0;overflow:visible" width="1365" height="100"><defs><linearGradient id="ag3" gradientUnits="userSpaceOnUse" x1="0" y1="39.3" x2="0" y2="61.2"><stop offset="0" stop-color="#c9de00"/><stop offset="0.45" stop-color="#e0f300"/><stop offset="1" stop-color="#e8f805"/></linearGradient></defs><path style="filter:drop-shadow(2px 3px 2.5px rgba(0,0,0,.5))" d="M989.4 26.2 L1011.4 26.2 L1011.4 39.1 L1018.7 40.9 L999.6 61.2 L981 40.9 L989.4 39.1 Z" fill="url(#ag3)"/><ellipse style="filter:drop-shadow(1px 2.5px 2px rgba(0,0,0,.4))" cx="1000.4" cy="26.2" rx="17.6" ry="15.5" fill="#1f9a2e"/></svg>
<svg style="position:absolute;left:0;top:0;overflow:visible" width="1365" height="100"><path transform="translate(993.80 34.80) scale(0.01172 -0.01172)" d="M1049 389Q1049 194 925.0 87.0Q801 -20 571 -20Q357 -20 229.5 76.5Q102 173 78 362L264 379Q300 129 571 129Q707 129 784.5 196.0Q862 263 862 395Q862 510 773.5 574.5Q685 639 518 639H416V795H514Q662 795 743.5 859.5Q825 924 825 1038Q825 1151 758.5 1216.5Q692 1282 561 1282Q442 1282 368.5 1221.0Q295 1160 283 1049L102 1063Q122 1236 245.5 1333.0Q369 1430 563 1430Q775 1430 892.5 1331.5Q1010 1233 1010 1057Q1010 922 934.5 837.5Q859 753 715 723V719Q873 702 961.0 613.0Q1049 524 1049 389Z" fill="#fff" stroke="#fff" stroke-width="40"/></svg>
<svg style="position:absolute;left:0;top:0;overflow:visible" width="1365" height="100"><defs><linearGradient id="ag4" gradientUnits="userSpaceOnUse" x1="0" y1="39.3" x2="0" y2="61.2"><stop offset="0" stop-color="#c9de00"/><stop offset="0.45" stop-color="#e0f300"/><stop offset="1" stop-color="#e8f805"/></linearGradient></defs><path style="filter:drop-shadow(2px 3px 2.5px rgba(0,0,0,.5))" d="M1168.5 26.2 L1190.5 26.2 L1190.5 39.1 L1197.5 40.9 L1178.7 61.2 L1159.9 40.9 L1168.5 39.1 Z" fill="url(#ag4)"/><ellipse style="filter:drop-shadow(1px 2.5px 2px rgba(0,0,0,.4))" cx="1179.5" cy="26.2" rx="17.6" ry="15.5" fill="#1f9a2e"/></svg>
<svg style="position:absolute;left:0;top:0;overflow:visible" width="1365" height="100"><path transform="translate(1172.90 34.80) scale(0.01172 -0.01172)" d="M881 319V0H711V319H47V459L692 1409H881V461H1079V319ZM711 1206Q709 1200 683.0 1153.0Q657 1106 644 1087L283 555L229 481L213 461H711Z" fill="#fff" stroke="#fff" stroke-width="40"/></svg>
<svg style="position:absolute;left:0;top:0;overflow:visible" width="1365" height="100"><defs><linearGradient id="ag5" gradientUnits="userSpaceOnUse" x1="0" y1="41" x2="0" y2="63"><stop offset="0" stop-color="#c9de00"/><stop offset="0.45" stop-color="#e0f300"/><stop offset="1" stop-color="#e8f805"/></linearGradient></defs><path style="filter:drop-shadow(2px 3px 2.5px rgba(0,0,0,.5))" d="M1332.5 28.3 L1354.5 28.3 L1354.5 40.8 L1362.4 42.6 L1343.3 63 L1324 42.6 L1332.5 40.8 Z" fill="url(#ag5)"/><ellipse style="filter:drop-shadow(1px 2.5px 2px rgba(0,0,0,.4))" cx="1343.5" cy="28.3" rx="17.6" ry="15.5" fill="#1f9a2e"/></svg>
<svg style="position:absolute;left:0;top:0;overflow:visible" width="1365" height="100"><path transform="translate(1336.85 36.90) scale(0.01172 -0.01172)" d="M1053 459Q1053 236 920.5 108.0Q788 -20 553 -20Q356 -20 235.0 66.0Q114 152 82 315L264 336Q321 127 557 127Q702 127 784.0 214.5Q866 302 866 455Q866 588 783.5 670.0Q701 752 561 752Q488 752 425.0 729.0Q362 706 299 651H123L170 1409H971V1256H334L307 809Q424 899 598 899Q806 899 929.5 777.0Q1053 655 1053 459Z" fill="#fff" stroke="#fff" stroke-width="40"/></svg>
<div style="position:absolute;left:1363.80px;top:0.00px;width:1.20px;height:575.00px;background:#fff"></div>
</body></html>
